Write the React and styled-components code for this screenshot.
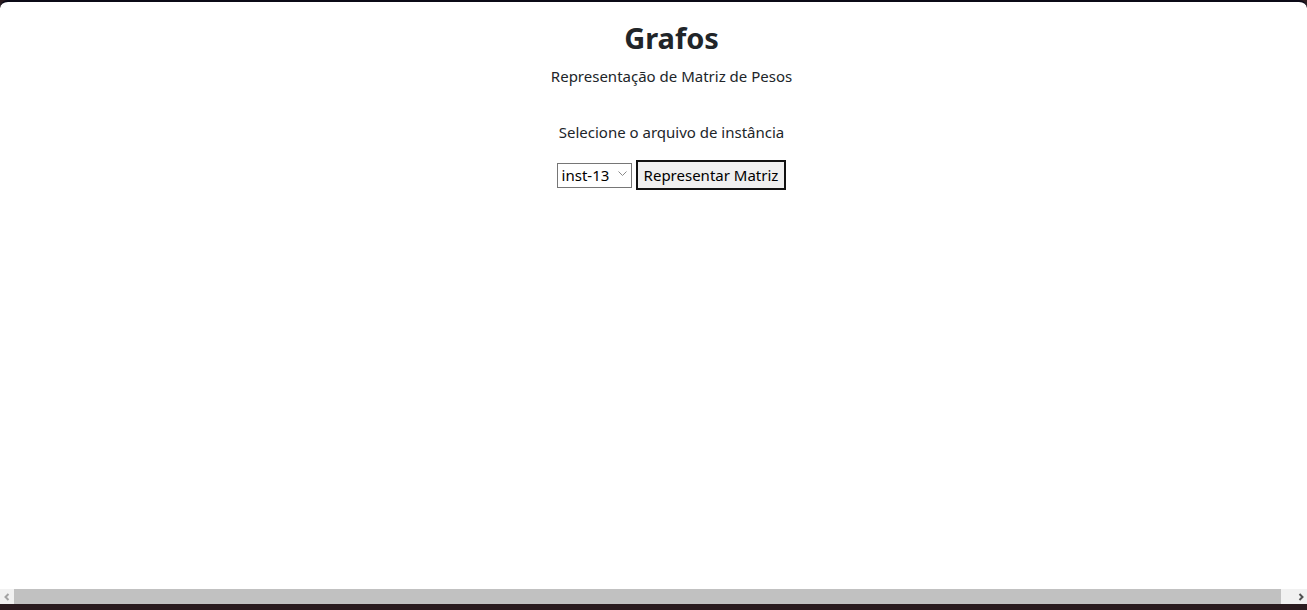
import React from 'react';
import styled, { createGlobalStyle } from 'styled-components';

const GlobalStyle = createGlobalStyle`
	html, body {
		margin: 0;
		padding: 0;
		height: 100%;
		overflow: hidden;
	}
	body {
		background: #0b0a17;
		font-family: 'Noto Sans', 'Open Sans', sans-serif;
	}
`;

const Frame = styled.div`
	height: 610px;
	width: 1307px;
	display: flex;
	flex-direction: column;
	background: #2a1b1f;
`;

const Page = styled.div`
	flex: 1;
	display: flex;
	flex-direction: column;
	background: #ffffff;
	border-top: 2px solid #0b0a17;
	border-radius: 8px 8px 0 0;
	overflow: hidden;
`;

const Content = styled.main`
	flex: 1;
	display: flex;
	flex-direction: column;
	align-items: center;
	padding: 17px 0 0 36px;
	color: #212529;
`;

const Title = styled.h1`
	margin: 0;
	font-size: 29px;
	font-weight: 700;
	line-height: 38px;
`;

const Subtitle = styled.p`
	margin: 10px 0 0;
	font-size: 15px;
	line-height: 19px;
`;

const Label = styled.label`
	margin-top: 37px;
	font-size: 15px;
	line-height: 19px;
`;

const Controls = styled.div`
	display: flex;
	align-items: center;
	gap: 4px;
	margin-top: 18px;
`;

const SelectWrap = styled.div`
	position: relative;
	height: 25px;
	color: #8a8a8a;
`;

const Select = styled.select`
	appearance: none;
	height: 25px;
	width: 75px;
	padding: 0 0 0 4px;
	font-family: inherit;
	font-size: 15px;
	color: #000;
	background: #fff;
	border: 1px solid #767676;
	border-radius: 0;
`;

const SelectArrow = styled.span`
	position: absolute;
	right: 5px;
	top: 8px;
	pointer-events: none;
	display: flex;
`;

const Button = styled.button`
	height: 30px;
	padding: 0 6px;
	font-family: inherit;
	font-size: 15px;
	color: #000;
	background: #efefef;
	border: 2px solid #111;
	border-radius: 0;
`;

const Scrollbar = styled.div`
	height: 15px;
	display: flex;
	background: #f1f1f1;
`;

const Arrow = styled.div`
	width: ${(props) => props.width || 14}px;
	display: flex;
	align-items: center;
	justify-content: ${(props) => (props.end ? 'flex-end' : 'center')};
	padding-right: ${(props) => (props.end ? 2 : 0)}px;
	box-sizing: border-box;
	color: ${(props) => (props.disabled ? '#a3a3a3' : '#505050')};
`;

const Thumb = styled.div`
	flex: 1;
	background: #c1c1c1;
`;

const Taskbar = styled.div`
	height: 6px;
	background: #2a1b1f;
`;

const Chevron = ({ dir }) => (
	<svg width="8" height="8" viewBox="0 0 8 8">
		<path
			d={dir === 'left' ? 'M5.5 1 L2.5 4 L5.5 7' : 'M2.5 1 L5.5 4 L2.5 7'}
			fill="none"
			stroke="currentColor"
			strokeWidth="2"
		/>
	</svg>
);

const SmallChevron = () => (
	<svg width="9" height="6" viewBox="0 0 9 6">
		<path d="M0.5 0.5 L4.5 4.5 L8.5 0.5" fill="none" stroke="currentColor" strokeWidth="1" />
	</svg>
);

const App = () => (
	<React.Fragment>
		<GlobalStyle />
		<Frame>
			<Page>
				<Content>
					<Title>Grafos</Title>
					<Subtitle>Representação de Matriz de Pesos</Subtitle>
					<Label htmlFor="instancia">Selecione o arquivo de instância</Label>
					<Controls>
						<SelectWrap>
							<Select id="instancia" defaultValue="inst-13">
								<option>inst-13</option>
							</Select>
							<SelectArrow>
								<SmallChevron />
							</SelectArrow>
						</SelectWrap>
						<Button>Representar Matriz</Button>
					</Controls>
				</Content>
				<Scrollbar>
					<Arrow disabled>
						<Chevron dir="left" />
					</Arrow>
					<Thumb />
					<Arrow width={26} end>
						<Chevron dir="right" />
					</Arrow>
				</Scrollbar>
			</Page>
			<Taskbar />
		</Frame>
	</React.Fragment>
);

export default App;
